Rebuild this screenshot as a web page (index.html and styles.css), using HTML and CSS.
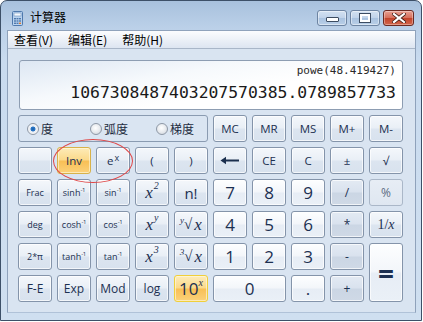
FILE: index.html
```html
<!DOCTYPE html>
<html>
<head>
<meta charset="utf-8">
<link rel="stylesheet" href="styles.css">
</head>
<body>
<div class="window">
  <div class="titlebar">
    <svg class="app-icon" width="11" height="15" viewBox="0 0 11 15">
      <rect x="0.5" y="0.5" width="10" height="14" rx="1" fill="#b9d3ef" stroke="#4f79ad"/>
      <rect x="2" y="2" width="7" height="3" fill="#f4f8fd" stroke="#6b8fbd" stroke-width="0.6"/>
      <g fill="#4f79ad">
        <rect x="2" y="7" width="2" height="1.4"/><rect x="4.5" y="7" width="2" height="1.4"/><rect x="7" y="7" width="2" height="1.4"/>
        <rect x="2" y="9.3" width="2" height="1.4"/><rect x="4.5" y="9.3" width="2" height="1.4"/><rect x="7" y="9.3" width="2" height="1.4"/>
        <rect x="2" y="11.6" width="2" height="1.4"/><rect x="4.5" y="11.6" width="2" height="1.4"/><rect x="7" y="11.6" width="2" height="1.4" fill="#e07a2e"/>
      </g>
    </svg>
    <span class="title">计算器</span>
    <div class="controls">
      <div class="ctl ctl-min"><span class="min-glyph"></span></div>
      <div class="ctl ctl-max"><span class="max-glyph"></span></div>
      <div class="ctl ctl-close">
        <svg width="14" height="10" viewBox="0 0 14 10"><path d="M2 1 L12 9 M12 1 L2 9" stroke="#3d1a12" stroke-width="3.6" stroke-linecap="square"/><path d="M2 1 L12 9 M12 1 L2 9" stroke="#ffffff" stroke-width="2.2" stroke-linecap="square"/></svg>
      </div>
    </div>
  </div>
  <div class="client">
    <div class="menubar">
      <span class="menu-item">查看(V)</span>
      <span class="menu-item">编辑(E)</span>
      <span class="menu-item">帮助(H)</span>
    </div>
    <div class="content">
      <div class="display">
        <div class="expr">powe(48.419427)</div>
        <div class="value">1067308487403207570385.0789857733</div>
      </div>
      <div class="keys">
        <div class="radios">
          <span class="radio r1"><span class="dot on"></span>度</span>
          <span class="radio r2"><span class="dot"></span>弧度</span>
          <span class="radio r3"><span class="dot"></span>梯度</span>
        </div>
        <div class="k">MC</div><div class="k">MR</div><div class="k">MS</div><div class="k">M+</div><div class="k">M-</div>

        <div class="k"></div>
        <div class="k hot">Inv</div>
        <div class="k">e<sup class="sx">x</sup></div>
        <div class="k">(</div>
        <div class="k">)</div>
        <div class="k"><svg width="20" height="9" viewBox="0 0 20 9"><path d="M19 4.5 H5" stroke="#1b2f4e" stroke-width="2"/><path d="M0.5 4.5 L6 0.8 V8.2 Z" fill="#1b2f4e"/></svg></div>
        <div class="k">CE</div>
        <div class="k">C</div>
        <div class="k">±</div>
        <div class="k">√</div>

        <div class="k sm">Frac</div>
        <div class="k sm">sinh<sup>-1</sup></div>
        <div class="k sm">sin<sup>-1</sup></div>
        <div class="k math">x<sup>2</sup></div>
        <div class="k big">n!</div>
        <div class="k num">7</div><div class="k num">8</div><div class="k num">9</div>
        <div class="k op">/</div>
        <div class="k dis">%</div>

        <div class="k sm">deg</div>
        <div class="k sm">cosh<sup>-1</sup></div>
        <div class="k sm">cos<sup>-1</sup></div>
        <div class="k math">x<sup>y</sup></div>
        <div class="k math"><span class="ix">y</span><span class="rad">√</span><span class="arg">x</span></div>
        <div class="k num">4</div><div class="k num">5</div><div class="k num">6</div>
        <div class="k op">*</div>
        <div class="k inv">1/<i>x</i></div>

        <div class="k sm">2*π</div>
        <div class="k sm">tanh<sup>-1</sup></div>
        <div class="k sm">tan<sup>-1</sup></div>
        <div class="k math">x<sup>3</sup></div>
        <div class="k math"><span class="ix">3</span><span class="rad">√</span><span class="arg">x</span></div>
        <div class="k num">1</div><div class="k num">2</div><div class="k num">3</div>
        <div class="k op">-</div>
        <div class="k num eq">=</div>

        <div class="k md">F-E</div>
        <div class="k md">Exp</div>
        <div class="k md">Mod</div>
        <div class="k md">log</div>
        <div class="k hot ten">10<sup><i>x</i></sup></div>
        <div class="k num zero">0</div>
        <div class="k num">.</div>
        <div class="k op">+</div>
      </div>
      <div class="mark"></div>
    </div>
  </div>
</div>
</body>
</html>
```
FILE: styles.css
```css
html, body { margin: 0; padding: 0; }
body {
  width: 423px; height: 322px; overflow: hidden;
  background: #ffffff;
  font-family: "Open Sans", "Noto Sans", "Noto Sans CJK SC", sans-serif;
}
.window {
  box-sizing: border-box;
  width: 422px; height: 321px;
  border: 1px solid #3d5068;
  border-radius: 7px 7px 0 0;
  background: linear-gradient(to bottom, #a8c1dd 0px, #bcd1e9 28px, #c9dbef 60px, #cfdff0 100%);
  padding: 0 5px 7px 6px;
  display: flex; flex-direction: column;
}
.titlebar {
  height: 29px; flex: none;
  display: flex; align-items: flex-start;
}
.app-icon { margin: 10px 0 0 5px; }
.title {
  margin: 8px 0 0 7px;
  font-family: "Noto Sans CJK SC", sans-serif;
  font-size: 12px; color: #000; line-height: 16px;
}
.controls { margin-left: auto; margin-top: 9px; display: flex; gap: 3px; margin-right: 2px; }
.ctl {
  box-sizing: border-box; height: 16px; border-radius: 3px;
  display: flex; align-items: center; justify-content: center;
}
.ctl-min, .ctl-max {
  width: 30px;
  border: 1px solid #6d84a2;
  background: linear-gradient(to bottom, #d3e1f1 0%, #c0d3ea 50%, #a9c2df 51%, #b9cfe8 100%);
  box-shadow: inset 0 0 0 1px rgba(255,255,255,0.45);
}
.ctl-close {
  width: 31px;
  border: 1px solid #6b2a22;
  background: linear-gradient(to bottom, #e8a092 0%, #d66e5a 50%, #c2432b 51%, #d3664b 100%);
  box-shadow: inset 0 0 0 1px rgba(255,255,255,0.35);
}
.min-glyph {
  width: 11px; height: 3px; margin-top: 3px;
  background: #fff; border: 1px solid #3c4c61; border-radius: 1px;
}
.max-glyph {
  width: 6px; height: 4px;
  border: 2px solid #fff; outline: 1px solid #3c4c61;
}
.client {
  flex: 1; display: flex; flex-direction: column;
  background: #d9e4f1;
  border: 1px solid #8fa2bb;
  border-bottom: 1px solid #b0c2d8;
}
.menubar {
  height: 17px; flex: none;
  background: linear-gradient(to bottom, #fbfcfe 0%, #eef2f8 45%, #dde5f1 100%);
  border-bottom: 1px solid #a9b6c8;
  display: flex; align-items: center;
  font-family: "Noto Sans CJK SC", sans-serif; font-size: 12px; color: #000;
  padding-left: 6px;
}
.menu-item { margin-right: 15px; line-height: 17px; }
.content {
  position: relative;
  padding: 11px 10px 10px 10px;
  display: flex; flex-direction: column; gap: 5px;
}
.display {
  margin-left: 1px;
  box-sizing: border-box;
  width: 384px; height: 50px;
  border: 1px solid #8d9db2; border-radius: 3px;
  background: linear-gradient(170deg, #dde7f3 0%, #f6f9fc 35%, #ffffff 60%);
  font-family: "DejaVu Sans Mono", "Liberation Mono", monospace;
  color: #1a1a1a; text-align: right;
  padding: 2px 6px 0 0;
  display: flex; flex-direction: column;
}
.expr { font-size: 11px; line-height: 14px; color: #2a2a2a; margin-top: 1px; }
.value { font-size: 16.4px; line-height: 22px; margin-top: 4px; }
.keys {
  display: grid;
  grid-template-columns: repeat(10, 34px);
  grid-auto-rows: 27px;
  gap: 5px;
}
.radios {
  grid-column: span 5;
  box-sizing: border-box;
  border: 1px solid #8a9bb1; border-radius: 3px;
  background: #dae5f2;
  display: flex; align-items: center;
  font-family: "Noto Sans CJK SC", sans-serif; font-size: 12px; color: #1e2c40;
  padding-left: 8px;
  white-space: nowrap;
}
.radio { display: flex; align-items: center; gap: 2px; flex: none; }
.r1 { width: 63px; }
.r2 { width: 66px; }
.dot {
  box-sizing: border-box; width: 12px; height: 12px; border-radius: 50%;
  border: 1px solid #8e98a6;
  background: radial-gradient(circle at 45% 40%, #ffffff 0%, #e8ebef 50%, #c8ced6 100%);
  flex: none;
}
.dot.on {
  background: radial-gradient(circle at 50% 50%, #1d5fa8 0%, #2a78c9 30%, #e8ecf2 40%, #ffffff 100%);
}
.k {
  box-sizing: border-box;
  border: 1px solid #8494aa;
  border-radius: 3px;
  background: linear-gradient(to bottom, #f4f7fb 0%, #e9eff6 48%, #dce5f0 52%, #d8e2ee 100%);
  box-shadow: inset 0 0 0 1px rgba(255,255,255,0.7);
  display: flex; align-items: center; justify-content: center;
  font-family: "Open Sans", "Noto Sans", sans-serif;
  font-size: 11.5px; color: #1c3051;
  white-space: nowrap;
}
.k sup { font-size: 7px; vertical-align: 0; position: relative; top: -4px; }
.k .sx { font-size: 9px; top: -3px; margin-left: 1px; }
.sm { font-size: 9px; }
.sm sup { font-size: 6px; top: -3px; letter-spacing: -0.3px; }
.md { font-size: 12px; }
.big { font-size: 15px; }
.math { font-family: "Liberation Serif", serif; font-style: italic; font-size: 17px; color: #1c3051; }
.math sup { font-size: 10px; top: -7px; margin-left: 1px; }
.math .ix { font-size: 9px; position: relative; top: -5px; margin-right: 0; }
.math .rad { font-style: normal; font-size: 15px; }
.math .arg { margin-left: 2px; }
.num {
  font-size: 17px; color: #1c3051;
  background: linear-gradient(to bottom, #fdfeff 0%, #f3f6fa 48%, #e7edf5 52%, #eaf0f7 100%);
}
.op {
  font-size: 12px;
  background: linear-gradient(to bottom, #e3eaf3 0%, #d9e2ee 48%, #cbd6e4 52%, #cfd9e6 100%);
}
.dis {
  font-size: 12px; color: #5b6b82;
  border-color: #aab7c8;
  background: linear-gradient(to bottom, #e7edf5 0%, #dfe7f1 100%);
  box-shadow: none;
}
.inv { font-family: "Liberation Serif", serif; font-size: 14px; }
.eq { grid-column: 10; grid-row: 5 / span 2; font-size: 28px; font-weight: bold; }
.zero { grid-column: span 2; }
.hot {
  border-color: #d8b24a;
  background: linear-gradient(to bottom, #fdebb8 0%, #fbd98a 48%, #f8bf55 52%, #fbd27a 100%);
  box-shadow: inset 0 0 0 1px rgba(255,250,225,0.6);
}
.ten { font-size: 17px; border-color: #f0cf3a; }
.ten sup { font-family: "Liberation Serif", serif; font-size: 10px; top: -6px; }
.mark {
  position: absolute;
  left: 45px; top: 90px;
  width: 80px; height: 44px;
  box-sizing: border-box;
  border: 1px solid #e04646;
  border-radius: 50%;
}
```
